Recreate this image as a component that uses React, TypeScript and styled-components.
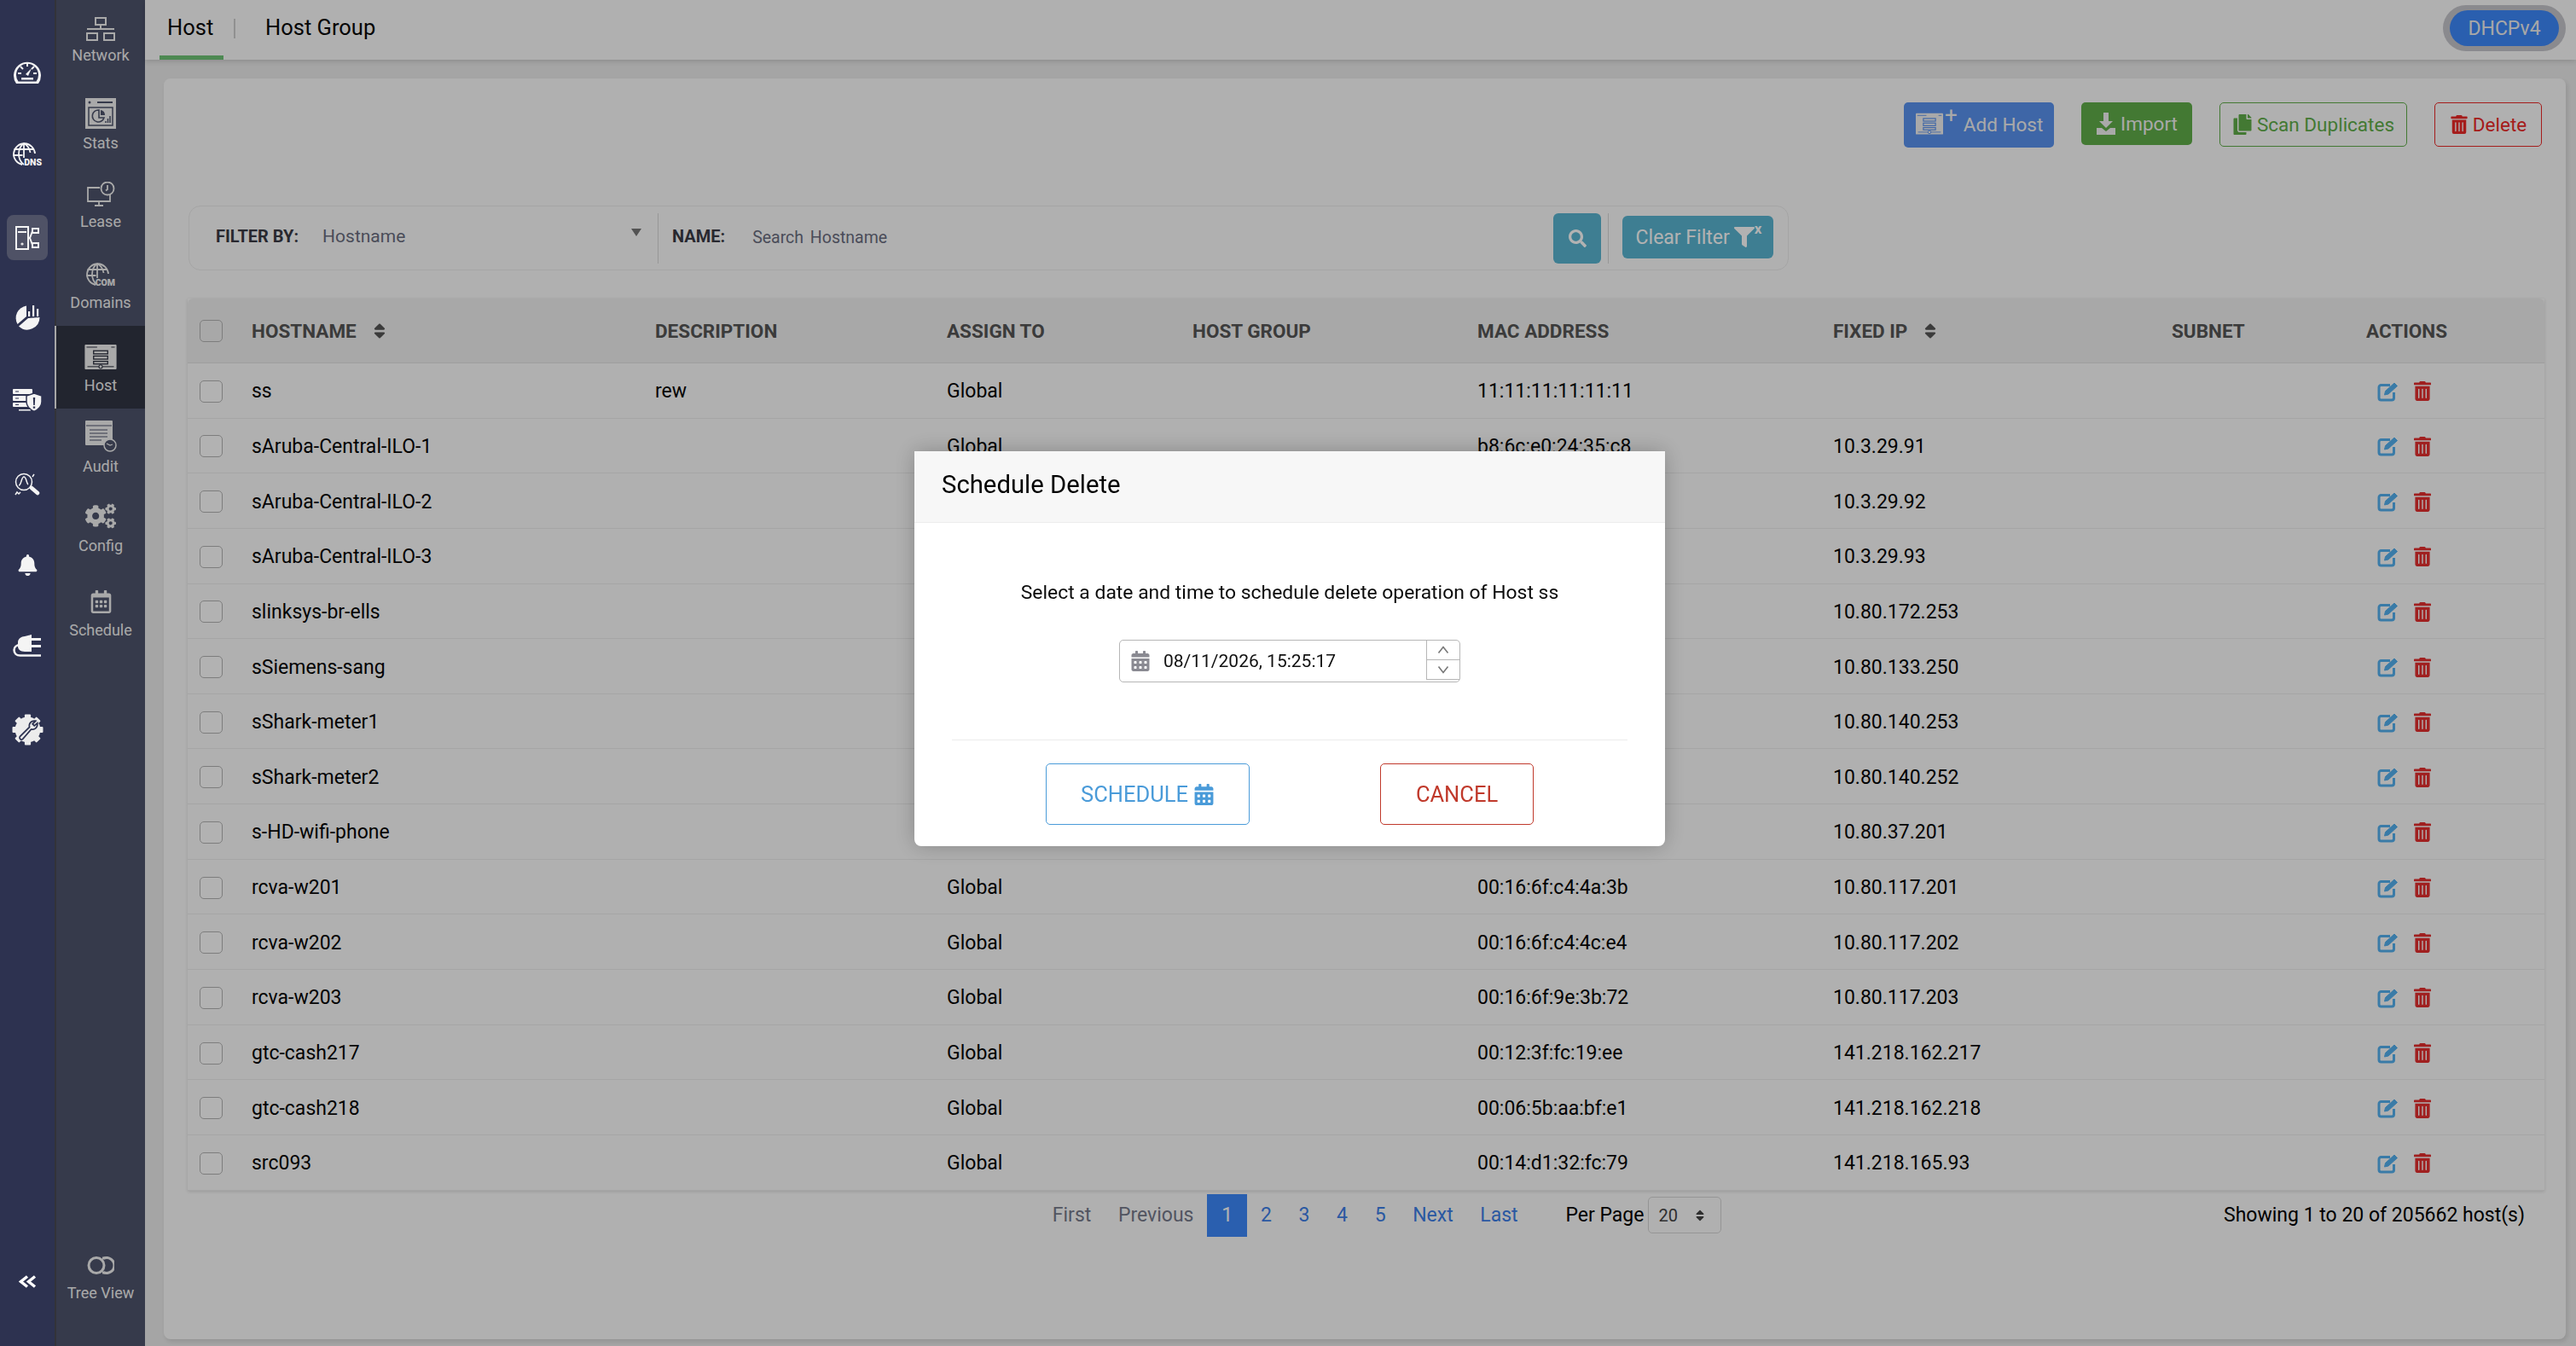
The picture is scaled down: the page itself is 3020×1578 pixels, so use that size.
import React from 'react';
import styled, { createGlobalStyle } from 'styled-components';
import { FaBell, FaCogs, FaRegCalendarAlt, FaCalendarAlt, FaSort, FaSearch, FaTrashAlt, FaCopy, FaFilter } from 'react-icons/fa';

const GlobalStyle = createGlobalStyle`
  html, body {
    margin: 0;
    padding: 0;
    height: 100%;
    font-family: Roboto, "Liberation Sans", sans-serif;
    color: #000;
  }
  * { box-sizing: border-box; }
`;

const Page = styled.div`
  display: flex;
  height: 1578px;
  overflow: hidden;
  background: #ececec;
`;

const Rail = styled.nav`
  position: relative;
  z-index: 30;
  width: 64px;
  flex: none;
  display: flex;
  flex-direction: column;
  align-items: center;
  padding: 0 0 66px;
  background: #2d3250;
`;

const RailItem = styled.div<{ $top: number; $active?: boolean }>`
  width: 48px;
  height: 53px;
  flex: none;
  margin-top: ${({ $top }) => $top}px;
  display: flex;
  align-items: center;
  justify-content: center;
  border-radius: 8px;
  color: #f4f4f4;
  background: ${({ $active }) => ($active ? '#4f5266' : 'transparent')};
`;

const RailBottom = styled.div`
  margin-top: auto;
  height: 20px;
  display: flex;
  align-items: center;
`;

const SideBar = styled.aside`
  width: 106px;
  flex: none;
  display: flex;
  flex-direction: column;
  border-left: 2px solid #4a4a52;
  background: #4e546c;
`;

const SideItem = styled.div<{ $h: number; $active?: boolean }>`
  height: ${({ $h }) => $h}px;
  flex: none;
  display: flex;
  flex-direction: column;
  align-items: center;
  justify-content: flex-end;
  gap: 6px;
  padding-bottom: 16px;
  margin-left: ${({ $active }) => ($active ? '-2px' : '0')};
  border-left: ${({ $active }) => ($active ? '2px solid #f0f0f0' : '0')};
  background: ${({ $active }) => ($active ? '#313544' : 'transparent')};
  color: #f2f2f2;
  font-size: 18px;
  line-height: 22px;
`;

const DomainsItem = styled(SideItem)`
  gap: 3px;
`;

const ScheduleItem = styled(SideItem)`
  gap: 9px;
  padding-bottom: 15px;
`;

const TreeItem = styled(SideItem)`
  margin-top: auto;
  gap: 11px;
  padding-bottom: 51px;
`;

const Main = styled.div`
  flex: 1;
  min-width: 0;
  display: flex;
  flex-direction: column;
`;

const TopBar = styled.header`
  height: 70px;
  flex: none;
  display: flex;
  align-items: stretch;
  padding: 0 12px 0 17px;
  background: #fcfcfc;
  box-shadow: 0 2px 6px rgba(0, 0, 0, 0.14);
`;

const Tab = styled.div<{ $active?: boolean }>`
  display: flex;
  align-items: center;
  height: 70px;
  padding: 0 9px;
  width: ${({ $active }) => ($active ? '75px' : 'auto')};
  font-size: 25.5px;
  line-height: 30px;
  padding-bottom: ${({ $active }) => ($active ? '2px' : '7px')};
  border-bottom: ${({ $active }) => ($active ? '5px solid #6fc476' : '0')};
  color: #0a0a0a;
`;

const TabDivider = styled.div`
  width: 2px;
  height: 23px;
  margin: 22px 26px 0 12px;
  background: #cfcfcf;
`;

const Pill = styled.div`
  margin: 6px 0 0 auto;
  height: 54px;
  width: 144px;
  padding: 6px 8px;
  border-radius: 27px;
  background: #c6c6cc;
`;

const PillInner = styled.div`
  height: 42px;
  border-radius: 21px;
  display: flex;
  align-items: center;
  justify-content: center;
  background: #3d89fb;
  color: #f0f0f0;
  font-size: 23px;
`;

const Card = styled.main`
  flex: 1;
  min-height: 0;
  margin: 22px 12px 8px 22px;
  padding: 28px 25px 0 28px;
  border-radius: 8px;
  background: #fdfdfd;
  box-shadow: 2px 3px 5px rgba(0, 0, 0, 0.1);
`;

const Toolbar = styled.div`
  display: flex;
  justify-content: flex-end;
  align-items: flex-start;
  height: 53px;
  gap: 32px;
  padding-right: 3px;
`;

const ToolButton = styled.div<{ $bg?: string; $line?: string; $w: number; $h: number }>`
  width: ${({ $w }) => $w}px;
  height: ${({ $h }) => $h}px;
  display: flex;
  align-items: center;
  justify-content: center;
  gap: 5px;
  padding-bottom: 1px;
  border-radius: 5px;
  font-size: 22.5px;
  color: ${({ $bg, $line }) => ($bg ? '#f2f2f2' : $line)};
  background: ${({ $bg }) => $bg || 'transparent'};
  border: ${({ $line }) => ($line ? `1.5px solid ${$line}` : '0')};
`;

const AddHostButton = styled(ToolButton)`
  justify-content: flex-start;
  padding-left: 14px;
`;

const FilterBar = styled.div`
  width: 1876px;
  height: 76px;
  margin: 68px 0 33px 1px;
  padding-right: 17px;
  display: flex;
  align-items: center;
  border: 1px solid #ececec;
  border-radius: 14px;
`;

const FilterLabel = styled.div`
  font-size: 20px;
  font-weight: 700;
  color: #3a3a44;
  white-space: nowrap;
  padding-bottom: 4px;
`;

const SelectCell = styled.div`
  width: 550px;
  height: 59px;
  flex: none;
  position: relative;
  display: flex;
  align-items: center;
  gap: 28px;
  padding-left: 31px;
  border-right: 1px solid #d8d8d8;
`;

const SelectValue = styled.div`
  font-size: 21px;
  color: #6a6d80;
  padding-bottom: 4px;
`;

const Caret = styled.div`
  position: absolute;
  right: 19px;
  top: 18px;
  width: 0;
  height: 0;
  border-left: 6px solid transparent;
  border-right: 6px solid transparent;
  border-top: 9px solid #777;
`;

const NameCell = styled.div`
  flex: 1;
  display: flex;
  align-items: center;
  gap: 32px;
  padding-left: 16px;
`;

const Placeholder = styled.div`
  font-size: 19.5px;
  word-spacing: 3px;
  color: #6a6d80;
  padding-bottom: 2px;
`;

const SearchButton = styled.div`
  width: 56px;
  height: 59px;
  flex: none;
  display: flex;
  align-items: center;
  justify-content: center;
  border-radius: 6px;
  background: #5ab5d1;
  color: #fff;
`;

const VLine = styled.div`
  width: 1px;
  height: 59px;
  flex: none;
  margin: 0 16px 0 8px;
  background: #d8d8d8;
`;

const ClearButton = styled.div`
  width: 177px;
  height: 50px;
  flex: none;
  display: flex;
  align-items: center;
  justify-content: center;
  gap: 5px;
  padding-left: 2px;
  border-radius: 6px;
  background: #5ab5d1;
  color: #fff;
  font-size: 23px;
  margin-bottom: 2px;
`;

const FilterX = styled.span`
  font-size: 17px;
  font-weight: 700;
  line-height: 1;
  margin: -20px 0 0 -5px;
`;

const Table = styled.div`
  box-shadow: 0 1px 4px rgba(0, 0, 0, 0.14);
  font-size: 23px;
`;

const columns = '75px 473px 342px 288px 334px 417px 397px 228px 209px';

const HeadRow = styled.div`
  display: grid;
  grid-template-columns: ${columns};
  align-items: center;
  height: 76px;
  background: #f1f1f1;
  border-bottom: 1px solid #e2e2e2;
  border-radius: 6px 6px 0 0;
`;

const Row = styled.div`
  display: grid;
  grid-template-columns: ${columns};
  align-items: center;
  height: 64.65px;
  padding-top: 2px;
  border-bottom: 1px solid #ececec;
  color: #050505;
`;

const HeadCell = styled.div`
  display: flex;
  align-items: center;
  gap: 20px;
  font-size: 22.5px;
  font-weight: 700;
  color: #555;
`;

const SortIcon = styled(FaSort)`
  width: 14px;
  height: 22px;
  color: #555;
`;

const Check = styled.div`
  width: 27px;
  height: 26px;
  margin-left: 14px;
  border: 1.5px solid #b4b4b4;
  border-radius: 5px;
  background: #fff;
`;

const HeadCheck = styled(Check)`
  background: #f1f1f1;
`;

const ActionCell = styled.div`
  display: flex;
  align-items: center;
  gap: 16px;
  padding-left: 13px;
`;

const TrashIcon = styled(FaTrashAlt)`
  width: 20px;
  height: 23px;
  color: #e62e2e;
`;

const Pager = styled.div`
  display: flex;
  align-items: center;
  height: 50px;
  margin-top: 4px;
  padding: 0 23px 0 998px;
  font-size: 23px;
`;

const PageLink = styled.div<{ $off?: boolean }>`
  padding: 0 15.8px;
  color: ${({ $off }) => ($off ? '#767a8c' : '#3d7fe8')};
`;

const PageCurrent = styled.div`
  width: 47px;
  height: 50px;
  display: flex;
  align-items: center;
  justify-content: center;
  background: #3d89fb;
  color: #fff;
`;

const PerPage = styled.div`
  margin-left: 40px;
  display: flex;
  align-items: center;
  gap: 5px;
`;

const PerSelect = styled.div`
  width: 86px;
  height: 43px;
  display: flex;
  align-items: center;
  gap: 18px;
  padding-left: 11px;
  border: 1.5px solid #d6d6d6;
  border-radius: 5px;
  font-size: 20px;
  color: #444;
`;

const Showing = styled.div`
  margin-left: auto;
`;

const Backdrop = styled.div`
  position: fixed;
  inset: 0;
  z-index: 20;
  background: rgba(0, 0, 0, 0.3);
`;

const Modal = styled.div`
  position: fixed;
  z-index: 40;
  left: 1072px;
  top: 529px;
  width: 880px;
  height: 463px;
  display: flex;
  flex-direction: column;
  background: #fff;
  border-radius: 0 0 8px 8px;
  box-shadow: 0 0 24px rgba(0, 0, 0, 0.25);
`;

const ModalHead = styled.div`
  height: 84px;
  flex: none;
  display: flex;
  align-items: center;
  padding: 0 0 5px 32px;
  background: #f7f7f7;
  border-bottom: 1px solid #ececec;
  font-size: 29.3px;
`;

const ModalText = styled.div`
  margin-top: 67px;
  text-align: center;
  font-size: 22.9px;
  line-height: 30px;
  color: #0a0a0a;
`;

const DateField = styled.div`
  width: 400px;
  height: 50px;
  margin: 40px 0 0 240px;
  display: flex;
  align-items: center;
  border: 1.5px solid #b6b6b6;
  border-radius: 5px;
  font-size: 21px;
  color: #111;
`;

const DateIcon = styled(FaCalendarAlt)`
  width: 22px;
  height: 24px;
  margin: 0 16px 0 13px;
  color: #8a8a92;
`;

const Spinner = styled.div`
  margin-left: auto;
  width: 39px;
  height: 46px;
  align-self: flex-start;
  display: flex;
  flex-direction: column;
  border-left: 1.5px solid #b6b6b6;
  border-bottom: 1.5px solid #b6b6b6;
`;

const SpinCell = styled.div`
  flex: 1;
  display: flex;
  align-items: center;
  justify-content: center;
  color: #777;
  & + & {
    border-top: 1.5px solid #b6b6b6;
  }
`;

const ModalRule = styled.div`
  height: 1px;
  margin: 67px 44px 0;
  background: #ececec;
`;

const ModalActions = styled.div`
  display: flex;
  margin-top: 27px;
  padding-left: 154px;
  gap: 153px;
`;

const ModalButton = styled.div<{ $color: string; $w: number }>`
  width: ${({ $w }) => $w}px;
  height: 72px;
  display: flex;
  align-items: center;
  justify-content: center;
  gap: 6px;
  border: 1.5px solid ${({ $color }) => $color};
  border-radius: 5px;
  color: ${({ $color }) => $color};
  font-size: 25.5px;
`;

const PlusSup = styled.span`
  font-size: 26px;
  line-height: 1;
  margin: -22px 2px 0 -3px;
`;

const GaugeIcon = () => (
  <svg width="34" height="30" viewBox="0 0 34 30">
    <path d="M4 29 A16 16 0 1 1 30 29 Z" fill="#f4f4f4" />
    <path d="M6.5 26.5 A13 13 0 1 1 27.5 26.5 Z" fill="#2d3250" />
    <path d="M17 5v4M6 17h4M24 17h4M9 9l3 3M25 9l-3 3" stroke="#f4f4f4" strokeWidth="2" />
    <path d="M15 18l7-7-4 9z" fill="#f4f4f4" />
    <rect x="10" y="22" width="14" height="2.5" fill="#f4f4f4" />
  </svg>
);

const GlobeTag = ({ tag, color }: { tag: string; color: string }) => (
  <svg width="36" height="33" viewBox="0 0 36 33">
    <g fill="none" stroke={color} strokeWidth="1.8">
      <path d="M12 26 A12.5 12.5 0 1 1 27 13" />
      <path d="M14 1c-8 6-8 19 0 25M14 1c5 3 7 7 7.5 11M14 1v17M2.5 8h23M1.5 15h11" />
    </g>
    <text x="35" y="27" textAnchor="end" fontFamily="Roboto, sans-serif" fontWeight="900" fontSize="10.5" fill={color}>{tag}</text>
  </svg>
);

const HostTreeIcon = () => (
  <svg width="28" height="28" viewBox="0 0 28 28" fill="none" stroke="#f4f4f4" strokeWidth="2">
    <rect x="1" y="1" width="14" height="26" />
    <path d="M3 7h10" />
    <circle cx="8" cy="21" r="0.6" />
    <rect x="20" y="3" width="7" height="5" />
    <rect x="20" y="20" width="7" height="5" />
    <path d="M15 14h2l3-8M17 14l3 8" />
  </svg>
);

const PieBarsIcon = () => (
  <svg width="30" height="30" viewBox="0 0 30 30" fill="#f4f4f4">
    <path d="M14 1.5V14L3.5 23A14.5 14.5 0 0 1 14 1.5z" />
    <path d="M29.5 15A14.5 14.5 0 0 1 5 25.5L16 16z" />
    <rect x="16" y="8" width="2.2" height="6" />
    <rect x="21" y="1" width="2.2" height="13" />
    <rect x="26" y="5" width="2.2" height="9" />
  </svg>
);

const ServerShieldIcon = () => (
  <svg width="35" height="27" viewBox="0 0 35 27" fill="#f4f4f4">
    <rect x="0" y="0" width="23" height="6" rx="1" />
    <rect x="0" y="8" width="21" height="6" rx="1" />
    <rect x="0" y="16" width="20" height="5" rx="1" />
    <rect x="7" y="24" width="14" height="1.5" />
    <path d="M25 5l9 3v7c0 6-4 9-9 11.5-5-2.5-9-5.5-9-11.5V8z" stroke="#2d3250" strokeWidth="1.5" />
    <path d="M23.8 10h2.4l-.4 9h-1.6zM23.8 20.5h2.4v2.2h-2.4z" fill="#2d3250" />
    <path d="M3 3h4M3 11h4M3 18.5h4" stroke="#2d3250" strokeWidth="1" />
  </svg>
);

const PeakSearchIcon = () => (
  <svg width="30" height="28" viewBox="0 0 30 28" fill="none" stroke="#f4f4f4" strokeWidth="1.5">
    <circle cx="11" cy="11" r="9.5" />
    <path d="M5 15c3 0 3-10 6-10s3 8 5 9" />
    <path d="M20 18l7 6" strokeWidth="4.5" strokeLinecap="round" />
    <path d="M21 5l2-3M1 26l2-3 2 2 2-2" />
  </svg>
);

const PlugIcon = () => (
  <svg width="34" height="26" viewBox="0 0 34 26" fill="#f4f4f4">
    <path d="M22 0v20h-8c-5 0-8-3-8-6V9c0-4 4-7 8-7z" />
    <rect x="22" y="4" width="11" height="3" />
    <rect x="22" y="12" width="11" height="3" />
    <path d="M9 12C4 12 1.5 15 1.5 18c0 4 3 6.5 7 6.5H33" fill="none" stroke="#f4f4f4" strokeWidth="2.5" />
  </svg>
);

const GearWrenchIcon = () => (
  <svg width="37" height="37" viewBox="0 0 36 36">
    {[0, 45, 90, 135].map(deg => (
      <rect key={deg} x="14.5" y="0.5" width="7" height="35" rx="1" fill="#ececec" transform={`rotate(${deg} 18 18)`} />
    ))}
    <circle cx="18" cy="18" r="14.5" fill="#ececec" />
    <path d="M9 26l11-11c-1-4 2-8 7-7l-3.5 3.5 2 2 3.5-3c.5 5-3 8-7 7L12 29c-2 1-4-1-3-3z" fill="none" stroke="#2d3250" strokeWidth="1.7" />
  </svg>
);

const DoubleChevron = () => (
  <svg width="21" height="15" viewBox="0 0 21 15" fill="none" stroke="#fff" strokeWidth="3.4">
    <path d="M10 1.5L2.5 7.5l7.5 6M19 1.5l-7.5 6 7.5 6" />
  </svg>
);

const NetworkIcon = () => (
  <svg width="34" height="28" viewBox="0 0 34 28" fill="none" stroke="#f2f2f2" strokeWidth="2">
    <rect x="11" y="1" width="12" height="8" />
    <rect x="1" y="19" width="12" height="8" />
    <rect x="21" y="19" width="12" height="8" />
    <path d="M1 14h32M17 9v5" />
  </svg>
);

const StatsIcon = () => (
  <svg width="36" height="36" viewBox="0 0 36 36">
    <rect width="36" height="36" fill="#f2f2f2" />
    <rect x="4" y="11" width="28" height="21" fill="none" stroke="#4e546c" strokeWidth="1.5" />
    <circle cx="5" cy="5" r="1.5" fill="#4e546c" />
    <rect x="14" y="4" width="18" height="2" fill="#4e546c" />
    <path d="M16 14a7 7 0 1 0 6 9h-6z" fill="none" stroke="#4e546c" strokeWidth="1.6" />
    <path d="M18 14a6 6 0 0 1 5 6h-5z" fill="#4e546c" />
    <path d="M24 29v-2M26.5 29v-5M29 29v-8" stroke="#4e546c" strokeWidth="1.5" />
  </svg>
);

const LeaseIcon = () => (
  <svg width="33" height="30" viewBox="0 0 33 30" fill="none" stroke="#f2f2f2" strokeWidth="1.8">
    <path d="M15 7H1v16h26v-8" />
    <path d="M9 28h10M14 23v5" />
    <circle cx="24" cy="8" r="7.5" fill="#4e546c" />
    <path d="M24 4v5l-2 1.5" />
  </svg>
);

const HostWindowIcon = ({ color, bg, w, h }: { color: string; bg: string; w: number; h: number }) => (
  <svg width={w} height={h} viewBox="0 0 36 30">
    <rect width="36" height="28" rx="1" fill={color} />
    <path d="M2 3h12M30 3h4" stroke={bg} strokeWidth="1" />
    <rect x="10" y="7" width="16" height="3.5" fill="none" stroke={bg} strokeWidth="1.3" />
    <rect x="10" y="13" width="16" height="3.5" fill="none" stroke={bg} strokeWidth="1.3" />
    <rect x="10" y="19" width="16" height="3" fill="none" stroke={bg} strokeWidth="1.3" />
    <path d="M3 25h30" stroke={bg} strokeWidth="1" />
    <circle cx="18" cy="25" r="2" fill={color} stroke={bg} strokeWidth="1" />
  </svg>
);

const AuditIcon = () => (
  <svg width="37" height="37" viewBox="0 0 37 37">
    <rect width="32" height="29" rx="1" fill="#f2f2f2" />
    <path d="M1 6h30M5 11h21M5 15h21M5 19h21M5 23h14" stroke="#4e546c" strokeWidth="1" />
    <circle cx="29" cy="29" r="7" fill="#4e546c" stroke="#f2f2f2" strokeWidth="1.5" />
    <path d="M25 27l4 2 3-1" fill="none" stroke="#f2f2f2" strokeWidth="1.3" />
  </svg>
);

const TreeViewIcon = () => (
  <svg width="32" height="21" viewBox="0 0 32 21" fill="none" stroke="#f2f2f2" strokeWidth="3">
    <circle cx="11" cy="10.5" r="9" />
    <path d="M20 2a9 9 0 1 1 0 17" />
    <path d="M18 2h3M18 19h3" />
  </svg>
);

const ImportIcon = () => (
  <svg width="24" height="26" viewBox="0 0 24 26" fill="#f2f2f2">
    <path d="M9 0h6v10h5l-8 8-8-8h5z" />
    <path d="M1 18h6l5 4 5-4h6v8H1z" />
  </svg>
);

const EditIcon = () => (
  <svg width="27" height="24" viewBox="0 0 27 24" fill="none" stroke="#53b0f0">
    <path d="M15 4.5H4.5A2.5 2.5 0 0 0 2 7v12.5A2.5 2.5 0 0 0 4.5 22H17a2.5 2.5 0 0 0 2.5-2.5V13" strokeWidth="3" />
    <path d="M8.5 16l1-4.5L20 2l3.5 3.5L13 15z" fill="#53b0f0" strokeWidth="1" />
  </svg>
);

const SpinChevron = ({ d }: { d: string }) => (
  <svg width="14" height="10" viewBox="0 0 14 10" fill="none" stroke="#777" strokeWidth="1.6">
    <path d={d} />
  </svg>
);

type Host = { name: string; desc?: string; assign?: string; mac?: string; ip: string };

const hosts: Host[] = [
  { name: 'ss', desc: 'rew', assign: 'Global', mac: '11:11:11:11:11:11', ip: '' },
  { name: 'sAruba-Central-ILO-1', assign: 'Global', mac: 'b8:6c:e0:24:35:c8', ip: '10.3.29.91' },
  { name: 'sAruba-Central-ILO-2', ip: '10.3.29.92' },
  { name: 'sAruba-Central-ILO-3', ip: '10.3.29.93' },
  { name: 'slinksys-br-ells', ip: '10.80.172.253' },
  { name: 'sSiemens-sang', ip: '10.80.133.250' },
  { name: 'sShark-meter1', ip: '10.80.140.253' },
  { name: 'sShark-meter2', ip: '10.80.140.252' },
  { name: 's-HD-wifi-phone', ip: '10.80.37.201' },
  { name: 'rcva-w201', assign: 'Global', mac: '00:16:6f:c4:4a:3b', ip: '10.80.117.201' },
  { name: 'rcva-w202', assign: 'Global', mac: '00:16:6f:c4:4c:e4', ip: '10.80.117.202' },
  { name: 'rcva-w203', assign: 'Global', mac: '00:16:6f:9e:3b:72', ip: '10.80.117.203' },
  { name: 'gtc-cash217', assign: 'Global', mac: '00:12:3f:fc:19:ee', ip: '141.218.162.217' },
  { name: 'gtc-cash218', assign: 'Global', mac: '00:06:5b:aa:bf:e1', ip: '141.218.162.218' },
  { name: 'src093', assign: 'Global', mac: '00:14:d1:32:fc:79', ip: '141.218.165.93' },
];

const App: React.FC = () => (
  <Page>
    <GlobalStyle />
    <Rail>
      <RailItem $top={57}><GaugeIcon /></RailItem>
      <RailItem $top={47}><GlobeTag tag="DNS" color="#f4f4f4" /></RailItem>
      <RailItem $top={42} $active><HostTreeIcon /></RailItem>
      <RailItem $top={40}><PieBarsIcon /></RailItem>
      <RailItem $top={45}><ServerShieldIcon /></RailItem>
      <RailItem $top={45}><PeakSearchIcon /></RailItem>
      <RailItem $top={42}><FaBell size={25} /></RailItem>
      <RailItem $top={41}><PlugIcon /></RailItem>
      <RailItem $top={46}><GearWrenchIcon /></RailItem>
      <RailBottom><DoubleChevron /></RailBottom>
    </Rail>
    <SideBar>
      <SideItem $h={92}><NetworkIcon />Network</SideItem>
      <SideItem $h={103}><StatsIcon />Stats</SideItem>
      <SideItem $h={92}><LeaseIcon />Lease</SideItem>
      <DomainsItem $h={95}><GlobeTag tag="COM" color="#f2f2f2" />Domains</DomainsItem>
      <SideItem $h={97} $active><HostWindowIcon color="#f2f2f2" bg="#313544" w={38} h={31} />Host</SideItem>
      <SideItem $h={95}><AuditIcon />Audit</SideItem>
      <SideItem $h={93}><FaCogs size={36} />Config</SideItem>
      <ScheduleItem $h={98}><FaRegCalendarAlt size={27} />Schedule</ScheduleItem>
      <TreeItem $h={120}><TreeViewIcon />Tree View</TreeItem>
    </SideBar>
    <Main>
      <TopBar>
        <Tab $active>Host</Tab>
        <TabDivider />
        <Tab>Host Group</Tab>
        <Pill><PillInner>DHCPv4</PillInner></Pill>
      </TopBar>
      <Card>
        <Toolbar>
          <AddHostButton $bg="#5992ef" $w={176} $h={53}>
            <HostWindowIcon color="#f2f2f2" bg="#5992ef" w={32} h={30} />
            <PlusSup>+</PlusSup>
            Add Host
          </AddHostButton>
          <ToolButton $bg="#60ae49" $w={130} $h={50}><ImportIcon />Import</ToolButton>
          <ToolButton $line="#60ae49" $w={220} $h={52}><FaCopy size={24} />Scan Duplicates</ToolButton>
          <ToolButton $line="#ec2927" $w={126} $h={52}><FaTrashAlt size={22} />Delete</ToolButton>
        </Toolbar>
        <FilterBar>
          <SelectCell>
            <FilterLabel>FILTER BY:</FilterLabel>
            <SelectValue>Hostname</SelectValue>
            <Caret />
          </SelectCell>
          <NameCell>
            <FilterLabel>NAME:</FilterLabel>
            <Placeholder>Search Hostname</Placeholder>
          </NameCell>
          <SearchButton><FaSearch size={21} /></SearchButton>
          <VLine />
          <ClearButton>
            Clear Filter
            <FaFilter size={24} />
            <FilterX>x</FilterX>
          </ClearButton>
        </FilterBar>
        <Table>
          <HeadRow>
            <HeadCheck />
            <HeadCell>HOSTNAME <SortIcon /></HeadCell>
            <HeadCell>DESCRIPTION</HeadCell>
            <HeadCell>ASSIGN TO</HeadCell>
            <HeadCell>HOST GROUP</HeadCell>
            <HeadCell>MAC ADDRESS</HeadCell>
            <HeadCell>FIXED IP <SortIcon /></HeadCell>
            <HeadCell>SUBNET</HeadCell>
            <HeadCell>ACTIONS</HeadCell>
          </HeadRow>
          {hosts.map(host => (
            <Row key={host.name}>
              <Check />
              <div>{host.name}</div>
              <div>{host.desc}</div>
              <div>{host.assign}</div>
              <div />
              <div>{host.mac}</div>
              <div>{host.ip}</div>
              <div />
              <ActionCell><EditIcon /><TrashIcon /></ActionCell>
            </Row>
          ))}
        </Table>
        <Pager>
          <PageLink $off>First</PageLink>
          <PageLink $off>Previous</PageLink>
          <PageCurrent>1</PageCurrent>
          <PageLink>2</PageLink>
          <PageLink>3</PageLink>
          <PageLink>4</PageLink>
          <PageLink>5</PageLink>
          <PageLink>Next</PageLink>
          <PageLink>Last</PageLink>
          <PerPage>
            Per Page
            <PerSelect>20 <FaSort size={16} /></PerSelect>
          </PerPage>
          <Showing>Showing 1 to 20 of 205662 host(s)</Showing>
        </Pager>
      </Card>
    </Main>
    <Backdrop />
    <Modal>
      <ModalHead>Schedule Delete</ModalHead>
      <ModalText>Select a date and time to schedule delete operation of Host ss</ModalText>
      <DateField>
        <DateIcon />
        08/11/2026, 15:25:17
        <Spinner>
          <SpinCell><SpinChevron d="M1.5 8.5L7 1.5l5.5 7" /></SpinCell>
          <SpinCell><SpinChevron d="M1.5 1.5L7 8.5l5.5-7" /></SpinCell>
        </Spinner>
      </DateField>
      <ModalRule />
      <ModalActions>
        <ModalButton $color="#4a9bd9" $w={239}>SCHEDULE <FaCalendarAlt size={25} /></ModalButton>
        <ModalButton $color="#c0392b" $w={180}>CANCEL</ModalButton>
      </ModalActions>
    </Modal>
  </Page>
);

export default App;
